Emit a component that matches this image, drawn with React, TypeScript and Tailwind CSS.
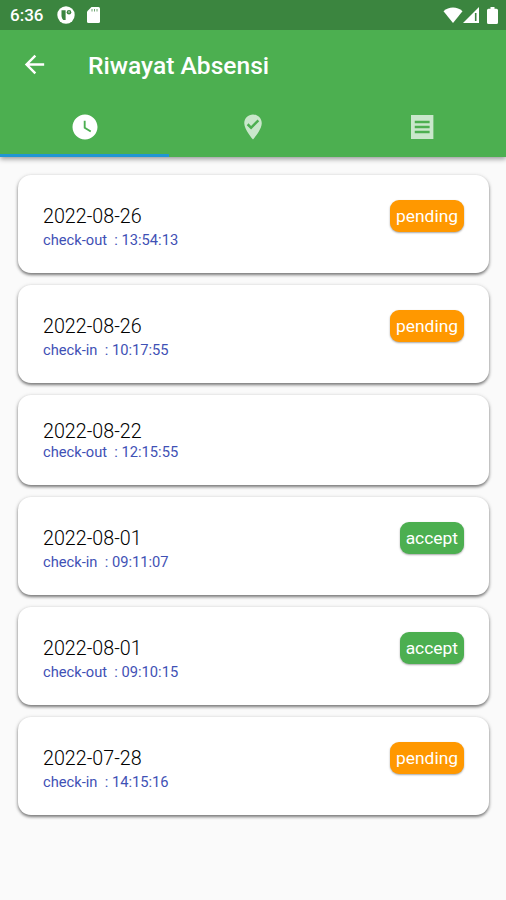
import React, { useState } from 'react';
import { MdArrowBack, MdWatchLater, MdWhereToVote } from 'react-icons/md';
import clsx from 'clsx';

type Status = 'pending' | 'accept';

interface Attendance {
  id: number;
  date: string;
  type: 'check-in' | 'check-out';
  time: string;
  status?: Status;
}

const attendances: Attendance[] = [
  { id: 1, date: '2022-08-26', type: 'check-out', time: '13:54:13', status: 'pending' },
  { id: 2, date: '2022-08-26', type: 'check-in', time: '10:17:55', status: 'pending' },
  { id: 3, date: '2022-08-22', type: 'check-out', time: '12:15:55' },
  { id: 4, date: '2022-08-01', type: 'check-in', time: '09:11:07', status: 'accept' },
  { id: 5, date: '2022-08-01', type: 'check-out', time: '09:10:15', status: 'accept' },
  { id: 6, date: '2022-07-28', type: 'check-in', time: '14:15:16', status: 'pending' }
];

const ReportIcon: React.FC<{ className?: string }> = ({ className }) => (
  <svg className={className} viewBox="0 0 24 24" fill="currentColor">
    <path d="M3.2 2.4h17.900v19.100H3.200zM6.200 7v1.900h11.900V7zM6.200 11v1.900h11.900V11zM6.200 15v1.900h11.900V15z" fillRule="evenodd" />
  </svg>
);

const tabs = [
  { id: 'history', label: 'Riwayat', icon: MdWatchLater },
  { id: 'location', label: 'Lokasi', icon: MdWhereToVote },
  { id: 'report', label: 'Laporan', icon: ReportIcon }
];

const StatusBar: React.FC = () => (
  <div className="flex h-[30px] items-center bg-[#3b853f] pl-[10px] pr-2 text-white">
    <span className="w-[47px] text-[17px] font-medium leading-none">6:36</span>
    <svg className="h-[18px] w-[18px]" viewBox="0 0 18 18">
      <circle cx="9" cy="9" r="8.7" fill="currentColor" />
      <path d="M4.5 4.300h4.100v9.700H6.300C5 12.600 4.500 11.200 4.500 9.500z" fill="#3b853f" />
      <circle cx="12" cy="6.200" r="2.300" fill="#3b853f" />
      <circle cx="12" cy="6" r="0.700" fill="currentColor" />
    </svg>
    <svg className="ml-3 h-4 w-[13px]" viewBox="0 0 13 16">
      <path d="M4.500 0H11.500A1.500 1.500 0 0 1 13 1.500V14.500A1.500 1.500 0 0 1 11.500 16H1.500A1.500 1.500 0 0 1 0 14.500V4.500z" fill="currentColor" />
      <path d="M5 2v2.500M7.500 2v2.500M10 2v2.500" stroke="#3b853f" strokeOpacity="0.75" />
    </svg>
    <div className="ml-auto flex items-center">
      <svg className="h-4 w-5" viewBox="0 0 20 16">
        <path d="M10 16L.500 4.200C3.200 1.800 6.400.500 10 .500s6.800 1.300 9.500 3.700z" fill="currentColor" />
      </svg>
      <svg className="h-4 w-4" viewBox="0 0 16 16">
        <path d="M16 0V16H0z" fill="currentColor" />
        <path d="M12.700 6v8" stroke="#3b853f" strokeWidth="1.600" />
      </svg>
      <svg className="ml-2 h-[17px] w-[11px]" viewBox="0 0 11 17">
        <path d="M3.500 0h4v1.700h2A1.500 1.500 0 0 1 11 3.200V15.500A1.500 1.500 0 0 1 9.500 17h-8A1.500 1.500 0 0 1 0 15.500V3.200A1.500 1.500 0 0 1 1.500 1.700h2z" fill="currentColor" />
      </svg>
    </div>
  </div>
);

const AttendanceCard: React.FC<{ item: Attendance }> = ({ item }) => (
  <div
    className={clsx(
      'flex justify-between rounded-[13px] bg-white px-[25px] pt-[25px] shadow-[0_2px_3px_rgba(0,0,0,0.42),0_1px_4px_rgba(0,0,0,0.2)]',
      item.status ? 'h-[98px]' : 'h-[90px]'
    )}
  >
    <div className={item.status ? 'pt-[5px]' : ''}>
      <p className="text-[19.7px] font-light leading-6 text-black">{item.date}</p>
      <p
        className={clsx(
          'whitespace-pre text-[14.7px] leading-[18px] text-[#3f51b5]',
          item.status ? 'mt-0.5' : '-mt-px'
        )}
      >
        {item.type}  : {item.time}
      </p>
    </div>

    {item.status && (
      <span
        className={clsx(
          'flex h-8 items-center rounded-[9px] px-1.5 text-[17.4px] text-white shadow-[0_1px_2px_rgba(0,0,0,0.35)]',
          item.status === 'pending' ? 'bg-[#ff9800]' : 'bg-[#4caf50]'
        )}
      >
        {item.status}
      </span>
    )}
  </div>
);

export default function App() {
  const [activeTab, setActiveTab] = useState('history');

  return (
    <div className="min-h-screen w-full bg-[#fafafa] font-[Roboto,sans-serif]">
      <header className="bg-[#4caf50] text-white shadow-[0_2px_5px_rgba(0,0,0,0.4)]">
        <StatusBar />
        <div className="flex h-[69px] items-center pl-5">
          <button aria-label="Kembali">
            <MdArrowBack className="h-[29px] w-[29px]" />
          </button>
          <h1 className="ml-[39px] pt-[3px] text-[24.6px] font-medium leading-none">Riwayat Absensi</h1>
        </div>

        {/* Tabs */}
        <div className="grid h-[58px] grid-cols-3">
          {tabs.map(({ id, label, icon: Icon }) => (
            <button
              key={id}
              aria-label={label}
              onClick={() => setActiveTab(id)}
              className={clsx(
                'flex items-center justify-center border-b-[3px] pl-px',
                activeTab === id ? 'border-[#2196d3]' : 'border-transparent'
              )}
            >
              <Icon className={clsx('h-[30px] w-[30px]', activeTab !== id && 'opacity-70')} />
            </button>
          ))}
        </div>
      </header>

      <main className="flex flex-col gap-3 pb-5 pl-[18px] pr-[17px] pt-[18px]">
        {attendances.map((item) => (
          <AttendanceCard key={item.id} item={item} />
        ))}
      </main>
    </div>
  );
}
